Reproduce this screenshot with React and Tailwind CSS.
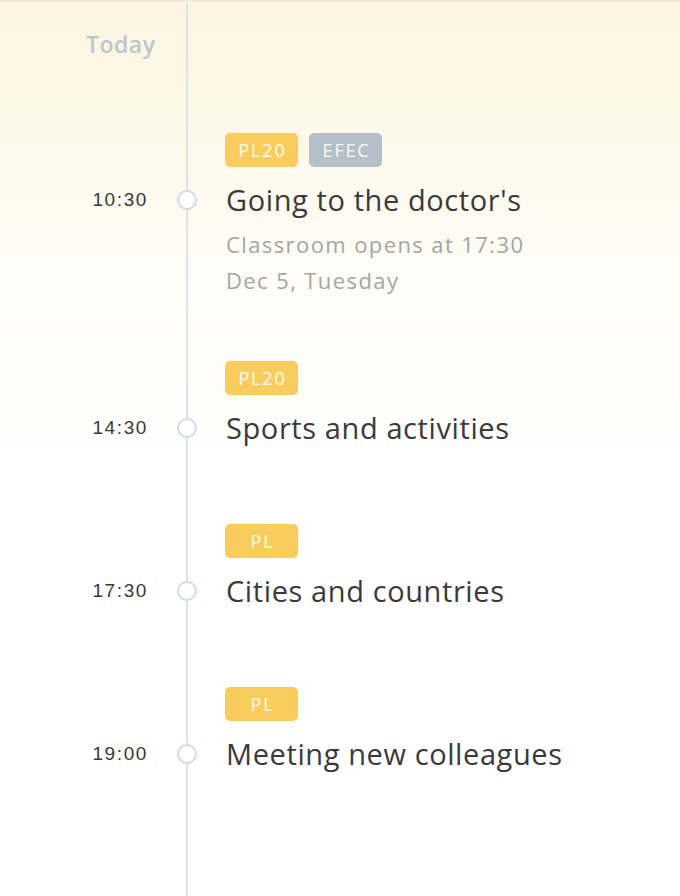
const lessons = [
  {
    time: "10:30",
    tags: [
      { label: "PL20", tone: "yellow" },
      { label: "EFEC", tone: "gray" },
    ],
    title: "Going to the doctor's",
    notes: ["Classroom opens at 17:30", "Dec 5, Tuesday"],
  },
  { time: "14:30", tags: [{ label: "PL20", tone: "yellow" }], title: "Sports and activities", notes: [] },
  { time: "17:30", tags: [{ label: "PL", tone: "yellow" }], title: "Cities and countries", notes: [] },
  { time: "19:00", tags: [{ label: "PL", tone: "yellow" }], title: "Meeting new colleagues", notes: [] },
];

function Row({ left, children, className = "", leftClass = "justify-end pr-[38px]" }) {
  return (
    <div className={`flex ${className}`}>
      <div className={`flex w-[186px] shrink-0 ${leftClass}`}>{left}</div>
      <div className="relative flex-1 border-l-2 border-[#dce3e9] pl-[38px]">{children}</div>
    </div>
  );
}

function Tag({ label, tone }) {
  const color = tone === "yellow" ? "bg-[#f8cd5e]" : "bg-[#b5bfc7]";
  return (
    <span
      className={`${color} inline-flex h-[34px] w-[73px] items-center justify-center rounded-[5px] pl-[2px] text-[18px] tracking-[1.8px] text-white/90`}
    >
      {label}
    </span>
  );
}

function Lesson({ lesson }) {
  const hasNotes = lesson.notes.length > 0;
  return (
    <div>
      <Row>
        <div className="-ml-[1px] flex gap-[11px]">
          {lesson.tags.map((t) => (
            <Tag key={t.label} {...t} />
          ))}
        </div>
      </Row>
      <Row
        className="h-[66px]"
        left={
          <span className="self-center font-['Liberation_Sans',sans-serif] text-[19px] tracking-[1.6px] text-[#383838]">
            {lesson.time}
          </span>
        }
      >
        <div className="flex h-[66px] items-center">
          {/* dot on the timeline */}
          <span className="absolute left-[-11px] top-1/2 h-[20px] w-[20px] -translate-y-1/2 rounded-full border-2 border-[#d3dbe2] bg-white" />
          <span className="text-[29px] tracking-[0.6px] text-[#3a3a3a]">{lesson.title}</span>
        </div>
      </Row>
      {hasNotes && (
        <Row>
          <div className="-mt-[7px] flex flex-col text-[22px] leading-[36px] tracking-[1.4px] text-[#a5a5a5]">
            {lesson.notes.map((n) => (
              <span key={n}>{n}</span>
            ))}
          </div>
        </Row>
      )}
      <Row className="h-[63px]" />
    </div>
  );
}

export default function App() {
  return (
    <div className="h-[896px] overflow-hidden bg-[linear-gradient(to_bottom,#fdf5e0,#fffdf8_300px,#ffffff_460px)] font-['Open_Sans',sans-serif]">
      <div className="h-[3px] bg-[linear-gradient(to_bottom,#ece6d6,transparent)]" />
      <Row
        className="h-[130px]"
        leftClass="justify-start pl-[86px]"
        left={<span className="mt-[24px] self-start text-[23px] font-semibold tracking-[0.5px] text-[#bcc6ce]">Today</span>}
      />
      {lessons.map((l) => (
        <Lesson key={l.time} lesson={l} />
      ))}
      <Row className="h-[200px]" />
    </div>
  );
}
